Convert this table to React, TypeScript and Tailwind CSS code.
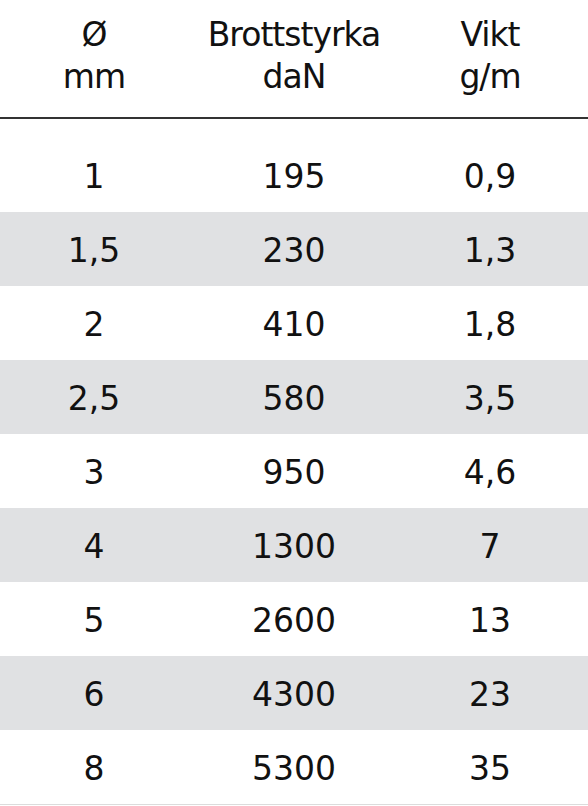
const rows: [string, string, string][] = [
  ["1", "195", "0,9"],
  ["1,5", "230", "1,3"],
  ["2", "410", "1,8"],
  ["2,5", "580", "3,5"],
  ["3", "950", "4,6"],
  ["4", "1300", "7"],
  ["5", "2600", "13"],
  ["6", "4300", "23"],
  ["8", "5300", "35"],
];

const cols = "grid grid-cols-[188px_212px_180px] text-center";

function App() {
  return (
    <div className="w-[588px] h-[806px] overflow-hidden bg-white text-[#111] font-['DejaVu_Sans',sans-serif] text-[33px]">
      {/* HEADER */}
      <div className={`${cols} pt-[14px] pb-[19px] leading-[42px] tracking-[-1px] border-b-2 border-[#333]`}>
        <div>
          Ø<br />mm
        </div>
        <div>
          Brottstyrka<br />daN
        </div>
        <div>
          Vikt<br />g/m
        </div>
      </div>

      <div className="h-[19px]" />

      {/* ROWS */}
      <div className="border-b border-[#dcdcdc]">
        {rows.map((r, i) => (
          <div
            key={i}
            className={`${cols} h-[74px] pt-[3px] leading-[71px] ${i % 2 === 1 ? "bg-[#e0e1e3]" : "bg-white"}`}
          >
            <div>{r[0]}</div>
            <div>{r[1]}</div>
            <div>{r[2]}</div>
          </div>
        ))}
      </div>
    </div>
  );
}

export default App;
